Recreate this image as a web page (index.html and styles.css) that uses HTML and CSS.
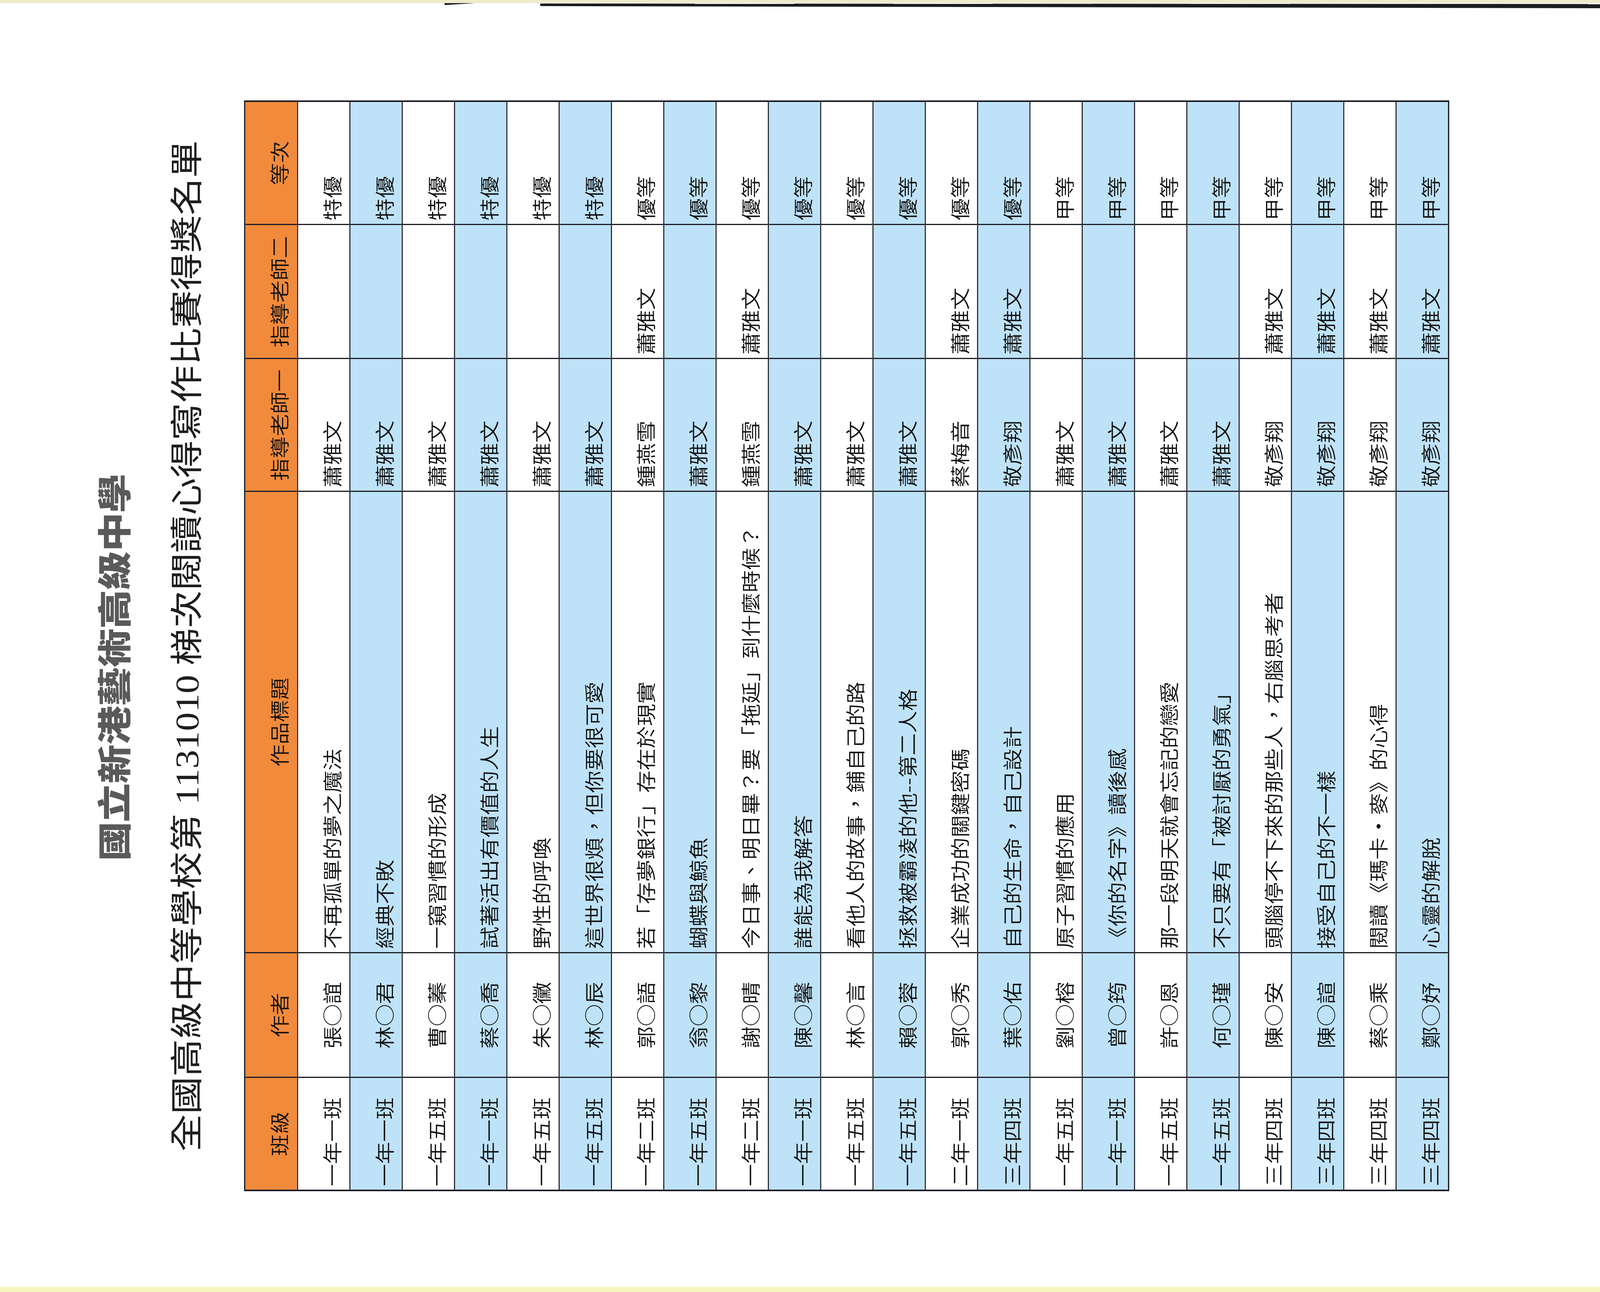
FILE: index.html
```html
<!DOCTYPE html>
<html lang="zh-Hant">
<head>
<meta charset="utf-8">
<title>全國高級中等學校第1131010梯次閱讀心得寫作比賽得獎名單</title>
<link rel="stylesheet" href="styles.css">
</head>
<body>
<div class="frame">
<div class="page">
  <div class="scan-top"></div>
  <div class="scan-bar-left"></div>
  <div class="scan-bar"></div>
  <div class="scan-bottom"></div>
  <main class="sheet">
    <h1 class="school">國立新港藝術高級中學</h1>
    <h2 class="title">全國高級中等學校第<span class="num"> 1131010 </span>梯次閱讀心得寫作比賽得獎名單</h2>
    <div class="tbl">
      <div class="row head">
        <div class="c">班級</div><div class="c">作者</div><div class="c">作品標題</div><div class="c">指導老師一</div><div class="c">指導老師二</div><div class="c">等次</div>
      </div>
      <div class="row"><div class="c">一年一班</div><div class="c c-author">張○誼</div><div class="c">不再孤單的夢之魔法</div><div class="c">蕭雅文</div><div class="c"></div><div class="c">特優</div></div>
      <div class="row"><div class="c">一年一班</div><div class="c c-author">林○君</div><div class="c">經典不敗</div><div class="c">蕭雅文</div><div class="c"></div><div class="c">特優</div></div>
      <div class="row"><div class="c">一年五班</div><div class="c c-author">曹○蓁</div><div class="c">一窺習慣的形成</div><div class="c">蕭雅文</div><div class="c"></div><div class="c">特優</div></div>
      <div class="row"><div class="c">一年一班</div><div class="c c-author">蔡○喬</div><div class="c">試著活出有價值的人生</div><div class="c">蕭雅文</div><div class="c"></div><div class="c">特優</div></div>
      <div class="row"><div class="c">一年五班</div><div class="c c-author">朱○黴</div><div class="c">野性的呼喚</div><div class="c">蕭雅文</div><div class="c"></div><div class="c">特優</div></div>
      <div class="row"><div class="c">一年五班</div><div class="c c-author">林○辰</div><div class="c">這世界很煩，但你要很可愛</div><div class="c">蕭雅文</div><div class="c"></div><div class="c">特優</div></div>
      <div class="row"><div class="c">一年二班</div><div class="c c-author">郭○語</div><div class="c">若「存夢銀行」存在於現實</div><div class="c">鍾燕雪</div><div class="c">蕭雅文</div><div class="c">優等</div></div>
      <div class="row"><div class="c">一年五班</div><div class="c c-author">翁○黎</div><div class="c">蝴蝶與鯨魚</div><div class="c">蕭雅文</div><div class="c"></div><div class="c">優等</div></div>
      <div class="row"><div class="c">一年二班</div><div class="c c-author">謝○晴</div><div class="c">今日事、明日畢？要「拖延」到什麼時候？</div><div class="c">鍾燕雪</div><div class="c">蕭雅文</div><div class="c">優等</div></div>
      <div class="row"><div class="c">一年一班</div><div class="c c-author">陳○馨</div><div class="c">誰能為我解答</div><div class="c">蕭雅文</div><div class="c"></div><div class="c">優等</div></div>
      <div class="row"><div class="c">一年五班</div><div class="c c-author">林○言</div><div class="c">看他人的故事，鋪自己的路</div><div class="c">蕭雅文</div><div class="c"></div><div class="c">優等</div></div>
      <div class="row"><div class="c">一年五班</div><div class="c c-author">賴○蓉</div><div class="c">拯救被霸凌的他--第二人格</div><div class="c">蕭雅文</div><div class="c"></div><div class="c">優等</div></div>
      <div class="row"><div class="c">二年一班</div><div class="c c-author">郭○秀</div><div class="c">企業成功的關鍵密碼</div><div class="c">蔡梅音</div><div class="c">蕭雅文</div><div class="c">優等</div></div>
      <div class="row"><div class="c">三年四班</div><div class="c c-author">葉○佑</div><div class="c">自己的生命，自己設計</div><div class="c">敬彥翔</div><div class="c">蕭雅文</div><div class="c">優等</div></div>
      <div class="row"><div class="c">一年五班</div><div class="c c-author">劉○榕</div><div class="c">原子習慣的應用</div><div class="c">蕭雅文</div><div class="c"></div><div class="c">甲等</div></div>
      <div class="row"><div class="c">一年一班</div><div class="c c-author">曾○筠</div><div class="c">《你的名字》讀後感</div><div class="c">蕭雅文</div><div class="c"></div><div class="c">甲等</div></div>
      <div class="row"><div class="c">一年五班</div><div class="c c-author">許○恩</div><div class="c">那一段明天就會忘記的戀愛</div><div class="c">蕭雅文</div><div class="c"></div><div class="c">甲等</div></div>
      <div class="row"><div class="c">一年五班</div><div class="c c-author">何○瑾</div><div class="c">不只要有「被討厭的勇氣」</div><div class="c">蕭雅文</div><div class="c"></div><div class="c">甲等</div></div>
      <div class="row"><div class="c">三年四班</div><div class="c c-author">陳○安</div><div class="c">頭腦停不下來的那些人，右腦思考者</div><div class="c">敬彥翔</div><div class="c">蕭雅文</div><div class="c">甲等</div></div>
      <div class="row"><div class="c">三年四班</div><div class="c c-author">陳○諠</div><div class="c">接受自己的不一樣</div><div class="c">敬彥翔</div><div class="c">蕭雅文</div><div class="c">甲等</div></div>
      <div class="row"><div class="c">三年四班</div><div class="c c-author">蔡○乘</div><div class="c">閱讀《瑪卡・麥》的心得</div><div class="c">敬彥翔</div><div class="c">蕭雅文</div><div class="c">甲等</div></div>
      <div class="row"><div class="c">三年四班</div><div class="c c-author">鄭○妤</div><div class="c">心靈的解脫</div><div class="c">敬彥翔</div><div class="c">蕭雅文</div><div class="c">甲等</div></div>
    </div>
  </main>
</div>
</div>
<script src="script.js"></script>
</body>
</html>
```

FILE: styles.css
```css
html, body {
  margin: 0;
  padding: 0;
  width: 100%;
  height: 100%;
  overflow: hidden;
  background: #ffffff;
}

body {
  font-family: "Noto Sans CJK TC", "Noto Sans CJK SC", sans-serif;
  color: #111;
}

.frame {
  width: 100vw;
  height: 100vh;
  overflow: hidden;
}

/* designed at 4680 x 3307; fitted to the real viewport */
.page {
  position: relative;
  width: 4680px;
  height: 3307px;
  overflow: hidden;
  background: #ffffff;
  transform-origin: 0 0;
  transform: scale(var(--sx, 1), var(--sy, 1));
}

/* scan edge artifacts */
.scan-top {
  position: absolute;
  left: 0;
  right: 0;
  top: 0;
  height: 8px;
  background: #f0e9cc;
}
.scan-bar-left {
  position: absolute;
  left: 1300px;
  width: 90px;
  top: 8px;
  height: 5px;
  background: #1c1c22;
  clip-path: polygon(0 0, 100% 0, 0 100%);
}
.scan-bar {
  position: absolute;
  left: 1580px;
  right: 0;
  top: 9px;
  height: 12px;
  background: #1c1c22;
  clip-path: polygon(0 0, 100% 10%, 100% 100%, 0 55%);
}
.scan-bottom {
  position: absolute;
  left: 0;
  right: 0;
  bottom: 0;
  height: 13px;
  background: #f8f4bd;
}

/* the page itself is printed in portrait and scanned sideways */
.sheet {
  width: 3307px;
  height: 4680px;
  box-sizing: border-box;
  padding-top: 279px;
  display: flex;
  flex-direction: column;
  align-items: center;
  transform-origin: 0 0;
  transform: translateY(3307px) rotate(-90deg);
}

.school {
  margin: 0;
  padding-right: 110px;
  font-size: 100px;
  line-height: 100px;
  height: 100px;
  font-weight: 900;
  color: #5a5a5a;
  letter-spacing: -1px;
  white-space: nowrap;
}

.title {
  margin: 113px 0 0 0;
  font-size: 96px;
  line-height: 96px;
  height: 96px;
  font-weight: 400;
  color: #1e1e1e;
  white-space: nowrap;
}

.num {
  font-family: "Liberation Serif", serif;
}

.tbl {
  margin-top: 126px;
  border: 4px solid #1b1b25;
  display: flex;
  flex-direction: column;
  background: #fff;
}

.row {
  display: grid;
  grid-template-columns: 286px 319px 1181px 340px 343px 315px;
  height: 153px;
  box-sizing: border-box;
  border-top: 3px solid #1b1b25;
}

.row.head {
  height: 151px;
  border-top: 0;
  background: #f18a3b;
}

.row:nth-child(odd):not(.head) {
  background: #bee2f8;
}

.c {
  box-sizing: border-box;
  display: flex;
  align-items: center;
  padding: 44px 0 0 9px;
  font-size: 57px;
  line-height: 57px;
  font-weight: 350;
  white-space: nowrap;
  overflow: hidden;
}

.c + .c {
  border-left: 3px solid #1b1b25;
}

.c-author,
.head .c {
  justify-content: center;
  padding-left: 0;
}
```

FILE: script.js
```js
(function () {
  var sx = window.innerWidth / 4680;
  var sy = window.innerHeight / 3307;
  if (!(sx > 0)) { sx = 1; }
  if (!(sy > 0)) { sy = 1; }
  var root = document.documentElement.style;
  root.setProperty('--sx', String(sx));
  root.setProperty('--sy', String(sy));
})();
```
